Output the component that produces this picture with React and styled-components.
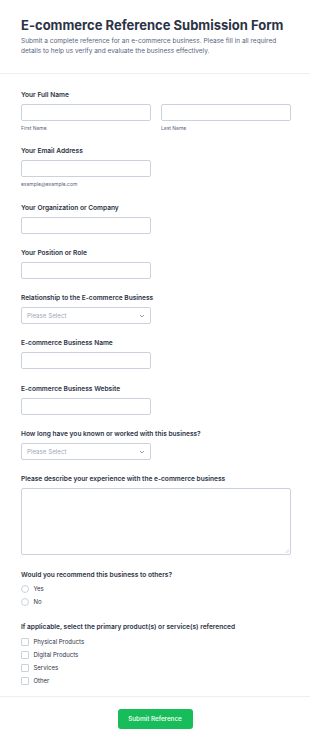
import React from "react";
import styled, { createGlobalStyle } from "styled-components";

const GlobalStyle = createGlobalStyle`
  html, body {
    margin: 0;
    padding: 0;
    background: #ffffff;
    font-family: Inter, "Noto Sans", sans-serif;
    color: #2c3345;
  }
  * { box-sizing: border-box; }
`;

const Page = styled.div`
  width: 310px;
  background: #ffffff;
`;

const Header = styled.header`
  padding: 15px 19px 17px 21px;
  border-bottom: 1px solid #eceef2;
`;

const Title = styled.h1`
  margin: 0;
  font-size: 13px;
  line-height: 20px;
  font-weight: 700;
  color: #2c3345;
  white-space: nowrap;
`;

const Subtitle = styled.p`
  margin: 1px 0 0;
  font-size: 6.5px;
  line-height: 10px;
  color: #57647e;
`;

const Body = styled.form`
  padding: 16px 19px 0 21px;
  display: flex;
  flex-direction: column;
  gap: 14.3px;
`;

const Field = styled.div`
  display: flex;
  flex-direction: column;
`;

const Label = styled.label`
  font-size: 6.6px;
  line-height: 10px;
  font-weight: 600;
  color: #2c3345;
  margin-bottom: 4px;
`;

const Row = styled.div`
  display: flex;
  gap: 10px;
`;

const Col = styled.div`
  flex: 1;
  display: flex;
  flex-direction: column;
`;

const Input = styled.div`
  width: ${(p) => (p.$full ? "100%" : "130px")};
  height: 17px;
  border: 1px solid #ccd2dd;
  border-radius: 2px;
  background: #fff;
`;

const Sub = styled.span`
  margin-top: 4px;
  font-size: 5px;
  line-height: 7px;
  color: #57647e;
`;

const Select = styled.div`
  width: 130px;
  height: 17px;
  border: 1px solid #ccd2dd;
  border-radius: 2px;
  display: flex;
  align-items: center;
  justify-content: space-between;
  padding: 0 5px;
  font-size: 6.2px;
  color: #a0a8b8;
`;

const TextArea = styled.div`
  height: 67px;
  border: 1px solid #ccd2dd;
  border-radius: 2px;
  position: relative;
`;

const Grip = styled.svg`
  position: absolute;
  right: 1px;
  bottom: 1px;
`;

const Options = styled.div`
  display: flex;
  flex-direction: column;
  gap: 5px;
  padding: ${(p) => p.$top || 1}px 0 2px;
`;

const Option = styled.div`
  display: flex;
  align-items: center;
  gap: 4.5px;
  font-size: 6px;
  line-height: 8px;
  color: #2c3345;
`;

const Radio = styled.span`
  width: 8px;
  height: 8px;
  border: 1px solid #ccd2dd;
  border-radius: 50%;
`;

const Box = styled.span`
  width: 8px;
  height: 8px;
  border: 1px solid #ccd2dd;
  border-radius: 1px;
`;

const Footer = styled.div`
  margin-top: 9.5px;
  border-top: 1px solid #eceef2;
  padding: 11.5px 0 17px;
  display: flex;
  justify-content: center;
`;

const Button = styled.button`
  width: 75px;
  height: 20px;
  border: none;
  border-radius: 3px;
  background: #18bd5b;
  color: #fff;
  font-family: Inter, sans-serif;
  font-size: 6.3px;
  font-weight: 500;
  padding: 0;
`;

function Chevron() {
  return (
    <svg width="6" height="4" viewBox="0 0 6 4">
      <path d="M1 1l2 2 2-2" stroke="#8a93a6" strokeWidth="0.9" fill="none" />
    </svg>
  );
}

function TextField({ label, sub }) {
  return (
    <Field>
      <Label>{label}</Label>
      <Input />
      {sub && <Sub>{sub}</Sub>}
    </Field>
  );
}

function SelectField({ label }) {
  return (
    <Field>
      <Label>{label}</Label>
      <Select>
        Please Select
        <Chevron />
      </Select>
    </Field>
  );
}

export default function App() {
  return (
    <Page>
      <GlobalStyle />
      <Header>
        <Title>E-commerce Reference Submission Form</Title>
        <Subtitle>
          Submit a complete reference for an e-commerce business. Please fill in all required
          details to help us verify and evaluate the business effectively.
        </Subtitle>
      </Header>
      <Body>
        <Field>
          <Label>Your Full Name</Label>
          <Row>
            <Col>
              <Input $full />
              <Sub>First Name</Sub>
            </Col>
            <Col>
              <Input $full />
              <Sub>Last Name</Sub>
            </Col>
          </Row>
        </Field>
        <TextField label="Your Email Address" sub="example@example.com" />
        <TextField label="Your Organization or Company" />
        <TextField label="Your Position or Role" />
        <SelectField label="Relationship to the E-commerce Business" />
        <TextField label="E-commerce Business Name" />
        <TextField label="E-commerce Business Website" />
        <SelectField label="How long have you known or worked with this business?" />
        <Field>
          <Label>Please describe your experience with the e-commerce business</Label>
          <TextArea>
            <Grip width="4" height="4" viewBox="0 0 4 4">
              <path d="M0 4L4 0M2 4L4 2" stroke="#b8bfcc" strokeWidth="0.5" />
            </Grip>
          </TextArea>
        </Field>
        <Field>
          <Label>Would you recommend this business to others?</Label>
          <Options>
            <Option><Radio />Yes</Option>
            <Option><Radio />No</Option>
          </Options>
        </Field>
        <Field>
          <Label>If applicable, select the primary product(s) or service(s) referenced</Label>
          <Options $top={2}>
            <Option><Box />Physical Products</Option>
            <Option><Box />Digital Products</Option>
            <Option><Box />Services</Option>
            <Option><Box />Other</Option>
          </Options>
        </Field>
      </Body>
      <Footer>
        <Button type="button">Submit Reference</Button>
      </Footer>
    </Page>
  );
}
